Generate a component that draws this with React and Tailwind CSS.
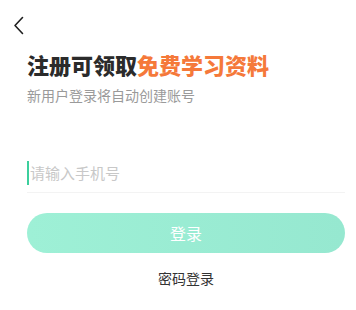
export default function App() {
  const font = { fontFamily: '"Noto Sans CJK SC", "Noto Sans", sans-serif' };
  return (
    <div className="w-[356px] h-[310px] bg-white overflow-hidden" style={font}>
      <div className="pt-[16px] pl-[13px] h-[36px]">
        <svg width="12" height="19" viewBox="0 0 12 19" fill="none">
          <path d="M9.5 1.5 L2 9.5 L9.5 17.5" stroke="#1f1f1f" strokeWidth="1.6" strokeLinecap="round" strokeLinejoin="round" />
        </svg>
      </div>
      <div className="pl-[27px] pr-[11px]">
        <h1 className="mt-[13px] text-[22px] leading-[30px] font-black text-[#2b2b2b]">
          注册可领取<span className="text-[#f5793a]">免费学习资料</span>
        </h1>
        <p className="mt-[6px] text-[14px] leading-[20px] text-[#9a9a9a]">新用户登录将自动创建账号</p>
        <div className="mt-[48px] h-[40px] flex items-center border-b border-[#f3f3f3]">
          <span className="w-[2px] h-[24px] bg-[#3ccf9d] mr-[1px]" />
          <span className="text-[15px] text-[#c8c8c8] leading-[24px]">请输入手机号</span>
        </div>
        <button className="mt-[20px] w-full h-[40px] rounded-full bg-gradient-to-r from-[#9ef0d6] to-[#96e8d0] text-white text-[16px] flex items-center justify-center">
          登录
        </button>
        <div className="mt-[15px] text-center text-[14px] leading-[20px] text-[#333]">密码登录</div>
      </div>
    </div>
  );
}
